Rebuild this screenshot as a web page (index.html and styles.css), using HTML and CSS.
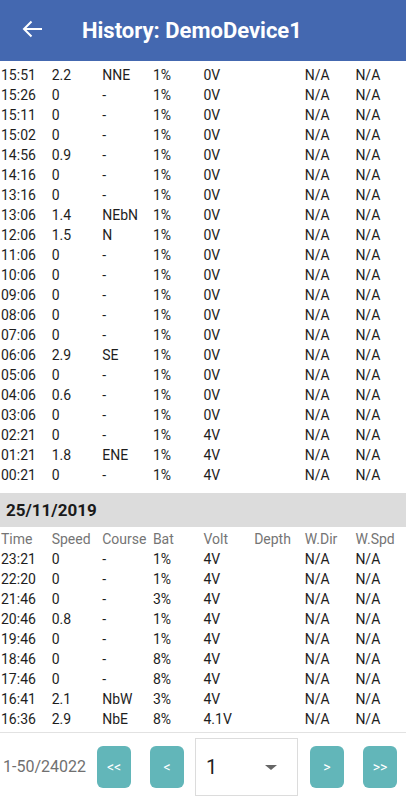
FILE: index.html
```html
<!DOCTYPE html>
<html>
<head>
<meta charset="utf-8">
<link rel="stylesheet" href="styles.css">
</head>
<body>
<div class="app">
  <header class="appbar">
    <svg class="back" width="22" height="20" viewBox="0 0 22 20"><path d="M21 10H3M10.5 2.5L3 10l7.5 7.5" fill="none" stroke="#fff" stroke-width="2"/></svg>
    <h1 class="title">History: DemoDevice1</h1>
  </header>
  <main class="list">
    <div class="rows">
      <div class="row"><span>15:51</span><span>2.2</span><span>NNE</span><span>1%</span><span>0V</span><span></span><span>N/A</span><span>N/A</span></div>
      <div class="row"><span>15:26</span><span>0</span><span>-</span><span>1%</span><span>0V</span><span></span><span>N/A</span><span>N/A</span></div>
      <div class="row"><span>15:11</span><span>0</span><span>-</span><span>1%</span><span>0V</span><span></span><span>N/A</span><span>N/A</span></div>
      <div class="row"><span>15:02</span><span>0</span><span>-</span><span>1%</span><span>0V</span><span></span><span>N/A</span><span>N/A</span></div>
      <div class="row"><span>14:56</span><span>0.9</span><span>-</span><span>1%</span><span>0V</span><span></span><span>N/A</span><span>N/A</span></div>
      <div class="row"><span>14:16</span><span>0</span><span>-</span><span>1%</span><span>0V</span><span></span><span>N/A</span><span>N/A</span></div>
      <div class="row"><span>13:16</span><span>0</span><span>-</span><span>1%</span><span>0V</span><span></span><span>N/A</span><span>N/A</span></div>
      <div class="row"><span>13:06</span><span>1.4</span><span>NEbN</span><span>1%</span><span>0V</span><span></span><span>N/A</span><span>N/A</span></div>
      <div class="row"><span>12:06</span><span>1.5</span><span>N</span><span>1%</span><span>0V</span><span></span><span>N/A</span><span>N/A</span></div>
      <div class="row"><span>11:06</span><span>0</span><span>-</span><span>1%</span><span>0V</span><span></span><span>N/A</span><span>N/A</span></div>
      <div class="row"><span>10:06</span><span>0</span><span>-</span><span>1%</span><span>0V</span><span></span><span>N/A</span><span>N/A</span></div>
      <div class="row"><span>09:06</span><span>0</span><span>-</span><span>1%</span><span>0V</span><span></span><span>N/A</span><span>N/A</span></div>
      <div class="row"><span>08:06</span><span>0</span><span>-</span><span>1%</span><span>0V</span><span></span><span>N/A</span><span>N/A</span></div>
      <div class="row"><span>07:06</span><span>0</span><span>-</span><span>1%</span><span>0V</span><span></span><span>N/A</span><span>N/A</span></div>
      <div class="row"><span>06:06</span><span>2.9</span><span>SE</span><span>1%</span><span>0V</span><span></span><span>N/A</span><span>N/A</span></div>
      <div class="row"><span>05:06</span><span>0</span><span>-</span><span>1%</span><span>0V</span><span></span><span>N/A</span><span>N/A</span></div>
      <div class="row"><span>04:06</span><span>0.6</span><span>-</span><span>1%</span><span>0V</span><span></span><span>N/A</span><span>N/A</span></div>
      <div class="row"><span>03:06</span><span>0</span><span>-</span><span>1%</span><span>0V</span><span></span><span>N/A</span><span>N/A</span></div>
      <div class="row"><span>02:21</span><span>0</span><span>-</span><span>1%</span><span>4V</span><span></span><span>N/A</span><span>N/A</span></div>
      <div class="row"><span>01:21</span><span>1.8</span><span>ENE</span><span>1%</span><span>4V</span><span></span><span>N/A</span><span>N/A</span></div>
      <div class="row"><span>00:21</span><span>0</span><span>-</span><span>1%</span><span>4V</span><span></span><span>N/A</span><span>N/A</span></div>
    </div>
    <div class="day">25/11/2019</div>
    <div class="rows second">
      <div class="row head"><span>Time</span><span>Speed</span><span>Course</span><span>Bat</span><span>Volt</span><span>Depth</span><span>W.Dir</span><span>W.Spd</span></div>
      <div class="row"><span>23:21</span><span>0</span><span>-</span><span>1%</span><span>4V</span><span></span><span>N/A</span><span>N/A</span></div>
      <div class="row"><span>22:20</span><span>0</span><span>-</span><span>1%</span><span>4V</span><span></span><span>N/A</span><span>N/A</span></div>
      <div class="row"><span>21:46</span><span>0</span><span>-</span><span>3%</span><span>4V</span><span></span><span>N/A</span><span>N/A</span></div>
      <div class="row"><span>20:46</span><span>0.8</span><span>-</span><span>1%</span><span>4V</span><span></span><span>N/A</span><span>N/A</span></div>
      <div class="row"><span>19:46</span><span>0</span><span>-</span><span>1%</span><span>4V</span><span></span><span>N/A</span><span>N/A</span></div>
      <div class="row"><span>18:46</span><span>0</span><span>-</span><span>8%</span><span>4V</span><span></span><span>N/A</span><span>N/A</span></div>
      <div class="row"><span>17:46</span><span>0</span><span>-</span><span>8%</span><span>4V</span><span></span><span>N/A</span><span>N/A</span></div>
      <div class="row"><span>16:41</span><span>2.1</span><span>NbW</span><span>3%</span><span>4V</span><span></span><span>N/A</span><span>N/A</span></div>
      <div class="row"><span>16:36</span><span>2.9</span><span>NbE</span><span>8%</span><span>4.1V</span><span></span><span>N/A</span><span>N/A</span></div>
    </div>
  </main>
  <footer class="pager">
    <span class="range">1-50/24022</span>
    <button class="btn first">&lt;&lt;</button>
    <button class="btn prev">&lt;</button>
    <div class="select"><span class="val">1</span><span class="caret"></span></div>
    <button class="btn next">&gt;</button>
    <button class="btn last">&gt;&gt;</button>
  </footer>
</div>
</body>
</html>
```

FILE: styles.css
```css
* { box-sizing: border-box; }
html, body { margin: 0; padding: 0; }
body {
  font-family: Roboto, "Liberation Sans", sans-serif;
  background: #fff;
  color: #1e1e1e;
}
.app {
  display: flex;
  flex-direction: column;
  height: 800px;
  overflow: hidden;
}
.appbar {
  flex: 0 0 61px;
  background: #4468b0;
  display: flex;
  align-items: center;
  padding-left: 21px;
}
.back { display: block; margin-top: -4px; }
.title {
  margin: 0 0 0 39px;
  font-size: 22px;
  font-weight: bold;
  color: #fff;
}
.list {
  flex: 1 1 auto;
  overflow: hidden;
  padding-top: 4px;
}
.row {
  display: grid;
  grid-template-columns: repeat(8, 1fr);
  height: 20px;
  line-height: 20px;
  font-size: 14px;
  padding-left: 1px;
  white-space: nowrap;
}
.row.head { color: #757575; }
.day {
  margin-top: 8px;
  height: 34px;
  background: #dcdcdc;
  font-size: 17px;
  font-weight: bold;
  line-height: 34px;
  padding-left: 6px;
  color: #1a1a1a;
}
.second { margin-top: 2px; }
.pager {
  flex: 0 0 68px;
  border-top: 1px solid #e2e2e2;
  display: flex;
  align-items: center;
  padding-left: 3px;
}
.range {
  font-size: 16px;
  color: #707070;
  width: 83px;
}
.btn {
  width: 34px;
  height: 42px;
  border: none;
  border-radius: 6px;
  background: #62b6b9;
  color: #fff;
  font-family: Roboto, "Liberation Sans", sans-serif;
  font-size: 14px;
  padding: 0;
}
.first { margin-left: 11px; }
.prev { margin-left: 19px; }
.next { margin-left: 12px; }
.last { margin-left: 19px; }
.select {
  margin-left: 11px;
  width: 103px;
  height: 58px;
  border: 1px solid #dcdcdc;
  display: flex;
  align-items: center;
  padding-left: 10px;
}
.val { font-size: 20px; color: #222; width: 59px; }
.caret {
  width: 0; height: 0;
  border-left: 6px solid transparent;
  border-right: 6px solid transparent;
  border-top: 5px solid #666;
  margin-top: 2px;
}
```
